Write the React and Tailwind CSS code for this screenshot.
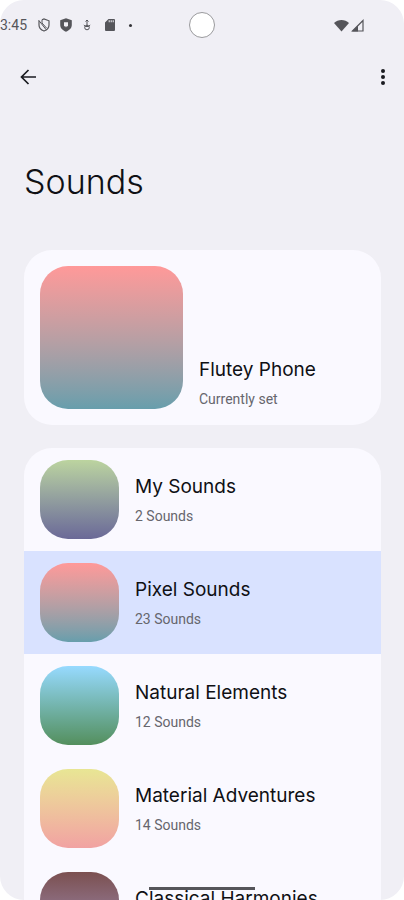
const current = {
  title: 'Flutey Phone',
  subtitle: 'Currently set',
};

const collections = [
  { id: 'my', title: 'My Sounds', count: 2, art: 'from-[#bcd49f] to-[#6b6997]' },
  { id: 'pixel', title: 'Pixel Sounds', count: 23, art: 'from-[#ff9999] to-[#679eac]', selected: true },
  { id: 'natural', title: 'Natural Elements', count: 12, art: 'from-[#97daff] to-[#548f5d]' },
  { id: 'material', title: 'Material Adventures', count: 14, art: 'from-[#e8e694] to-[#f1a2a2]' },
  { id: 'classical', title: 'Classical Harmonies', count: 12, art: 'from-[#7b5050] to-[#a498c8]' },
];

const StatusBar = () => (
  <div className="relative flex h-[50px] shrink-0 items-center justify-between pr-10 text-[#55555a]">
    <div className="flex items-center">
      <span className="w-7 text-sm font-['Roboto',sans-serif]">3:45</span>
      <svg className="ml-[9px] h-[14px] w-[14px]" viewBox="0 0 14 14" fill="none" stroke="currentColor" strokeWidth="1.2">
        <path d="M5 1.800 7 1l5 1.800V7c0 2.800-2 5-5 6-3-1-5-3.200-5-6V3" />
        <path d="M1.500 2 9 11.500M5 1.800V5l4.500 5" strokeWidth="1" />
      </svg>
      <svg className="ml-2 h-[14px] w-[14px]" viewBox="0 0 14 14" fill="currentColor">
        <path fillRule="evenodd" d="M7 .3 12.800 2.300V7c0 3-2.500 5.500-5.800 6.800C3.700 12.500 1.200 10 1.200 7V2.300ZM5 4.300v4h1.300L7 9.600l.7-1.300H9v-4Z" />
      </svg>
      <svg className="ml-[7px] h-[14px] w-[14px]" viewBox="0 0 14 14" fill="none" stroke="currentColor" strokeWidth="1">
        <path d="M7 2v6M5.500 3.500 7 2l1.500 1.500M3.800 7 5.500 8.500h3L10.200 7" />
        <circle cx="7" cy="9.500" r="2.300" />
      </svg>
      <svg className="ml-[9px] h-[14px] w-[14px]" viewBox="0 0 14 14" fill="currentColor">
        <path fillRule="evenodd" d="M5.500 1H11q1 0 1 1v10q0 1-1 1H3q-1 0-1-1V4.500ZM5.700 2.300v2h1v-2ZM7.700 2.300v2h1v-2ZM9.700 2.300v2h1v-2Z" />
      </svg>
      <span className="ml-3 h-[3px] w-[3px] rounded-full bg-[#333338]" />
    </div>
    {/* front camera cutout */}
    <div className="absolute left-1/2 h-[26px] w-[26px] -translate-x-1/2 rounded-full border border-[#99999c] bg-white" />
    <div className="flex items-center gap-[2px]">
      <svg className="h-[13px] w-[15px]" viewBox="0 0 15 13" fill="currentColor">
        <path d="M7.500 12.500 0 4C4 0 11 0 15 4Z" />
      </svg>
      <svg className="h-[13px] w-[13px]" viewBox="0 0 13 13" fill="none" stroke="currentColor" strokeWidth="1.200">
        <path d="M1.500 12 12 1.500V12Z" />
        <path d="M1 12.500 7 6.500v6Z" fill="currentColor" stroke="none" />
      </svg>
    </div>
  </div>
);

const AppBar = () => (
  <header className="flex h-[54px] shrink-0 items-center justify-between pl-4 pr-[9px] text-[#1a1b20]">
    <button type="button" aria-label="Back" className="flex h-6 w-6 items-center justify-center">
      <svg className="h-4 w-4" viewBox="0 0 16 16" fill="none" stroke="currentColor" strokeWidth="1.700">
        <path d="M8.500 1 1.500 8l7 7M1.500 8H16" />
      </svg>
    </button>
    <button type="button" aria-label="More options" className="flex h-6 w-6 items-center justify-center">
      <svg className="h-4 w-4" viewBox="0 0 16 16" fill="currentColor">
        <circle cx="8" cy="2" r="2" />
        <circle cx="8" cy="8" r="2" />
        <circle cx="8" cy="14" r="2" />
      </svg>
    </button>
  </header>
);

const Label = ({ title, subtitle }) => (
  <span className="flex min-w-0 flex-col gap-[5px]">
    <span className="truncate text-[19px] leading-7 text-[#0f1014]">{title}</span>
    <span className="font-['Roboto',sans-serif] text-sm leading-5 text-[#66666d]">{subtitle}</span>
  </span>
);

const App = () => {
  return (
    <div className="h-screen bg-white">
      <div className="relative flex h-full flex-col overflow-hidden rounded-[24px] bg-[#f0eff5] font-['Inter',sans-serif]">
        <StatusBar />
        <AppBar />
        <main className="flex min-h-0 flex-1 flex-col overflow-hidden pl-6 pr-[23px]">
          <h1 className="mt-14 text-[34px] font-light leading-[44px] text-[#0f1014]">Sounds</h1>

          <section className="mt-[46px] flex shrink-0 items-end gap-4 rounded-[28px] bg-[#faf9ff] p-4">
            <div className="h-[143px] w-[143px] shrink-0 rounded-[28px] bg-linear-to-b from-[#ff9999] to-[#679eac]" />
            <Label title={current.title} subtitle={current.subtitle} />
          </section>

          <ul className="mt-[23px] shrink-0 overflow-hidden rounded-[28px] bg-[#faf9ff]">
            {collections.map((item) => (
              <li key={item.id}>
                <button
                  type="button"
                  className={`flex w-full items-center gap-4 px-4 py-3 text-left ${item.selected ? 'bg-[#d9e2ff]' : ''}`}
                >
                  <span className={`h-[79px] w-[79px] shrink-0 rounded-[28px] bg-linear-to-b ${item.art}`} />
                  <Label title={item.title} subtitle={`${item.count} Sounds`} />
                </button>
              </li>
            ))}
          </ul>
        </main>
        {/* gesture handle */}
        <div className="absolute bottom-[10px] left-1/2 h-[3px] w-[106px] -translate-x-1/2 bg-[#55555a]" />
      </div>
    </div>
  );
};

export default App;
